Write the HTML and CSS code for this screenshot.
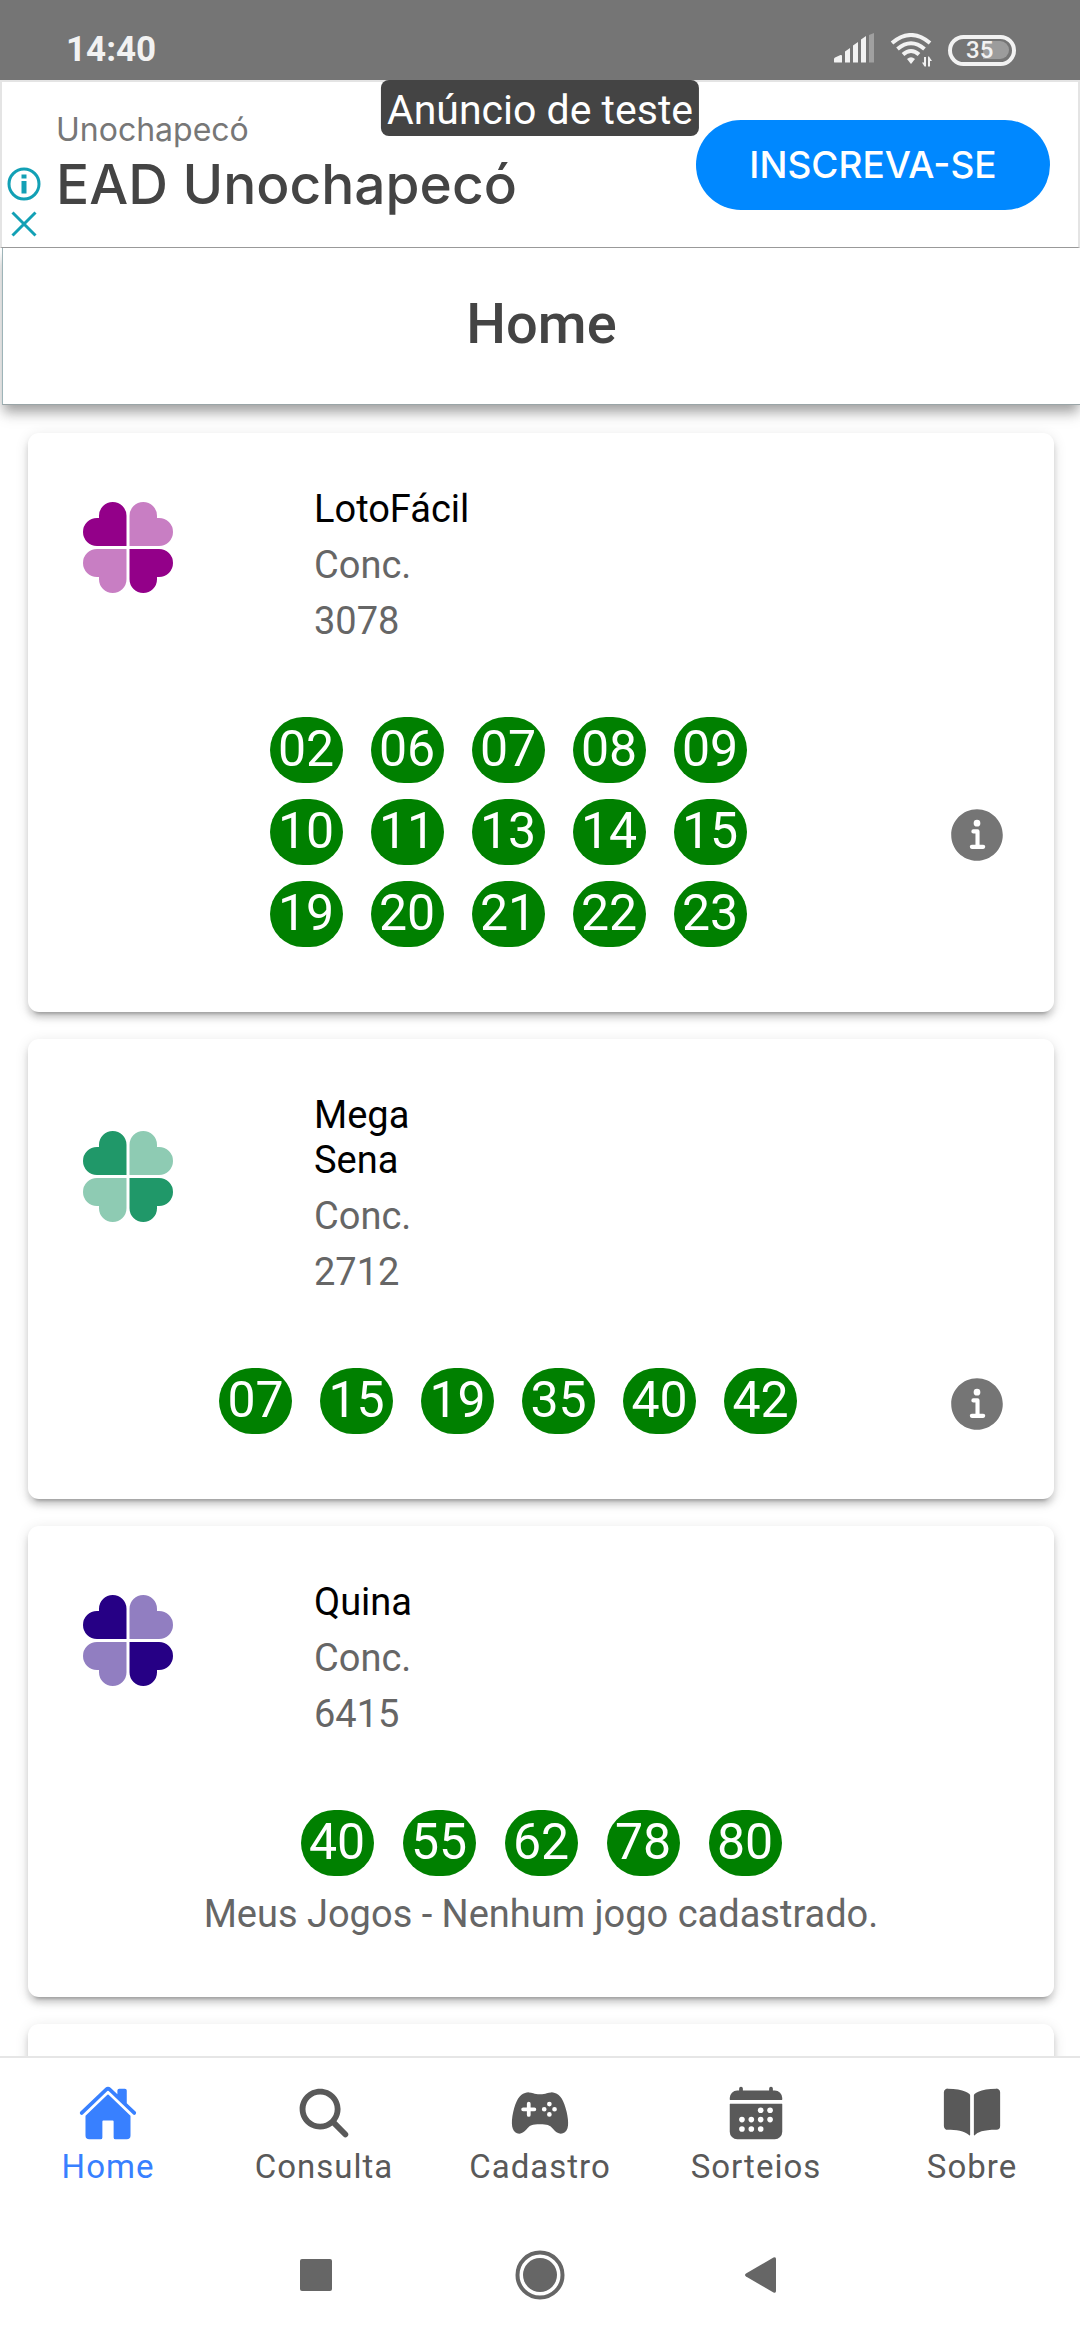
FILE: index.html
```html
<!DOCTYPE html>
<html lang="pt-BR">
<head>
<meta charset="utf-8">
<meta name="viewport" content="width=device-width, initial-scale=1">
<title>Home</title>
<link rel="stylesheet" href="styles.css">
</head>
<body>
<svg class="defs" aria-hidden="true">
  <defs>
    <path id="leaf" d="M43.5 44H14a14 14 0 0 1 0-28h2v-2.250a13.750 13.750 0 0 1 27.500 0z"/>
    <symbol id="clover" viewBox="0 0 90 91">
      <use href="#leaf"/>
      <use href="#leaf" transform="translate(90 91) scale(-1 -1)"/>
      <g opacity=".5">
        <use href="#leaf" transform="translate(90 0) scale(-1 1)"/>
        <use href="#leaf" transform="translate(0 91) scale(1 -1)"/>
      </g>
    </symbol>
    <symbol id="info" viewBox="0 0 512 512">
      <path d="M256 56C145.720 56 56 145.720 56 256s89.720 200 200 200 200-89.720 200-200S366.280 56 256 56zm0 82a26 26 0 11-26 26 26 26 0 0126-26zm48 226h-88a16 16 0 010-32h28v-88h-16a16 16 0 010-32h32a16 16 0 0116 16v104h28a16 16 0 010 32z"/>
    </symbol>
  </defs>
</svg>

<div class="status">
  <span class="clock">14:40</span>
  <svg class="signal" viewBox="0 0 40 34" aria-hidden="true">
    <path d="M0 29v-3q0-1 1-1.500L6.500 22q1.500-.5 1.500 1v6.500H1q-1 0-1-.5zM11 29.500v-11l5-3.500v14.500zM19 29.500v-17L24 9v20.500zM27 29.500v-23L32 3v26.500z"/>
    <path class="dim" d="M35 29.500V2l5-2v29.500z"/>
  </svg>
  <svg class="wifi" viewBox="0 0 42 34" aria-hidden="true">
    <g class="arcs"><path d="M2 10Q21-6 40 10"/><path d="M7.500 16Q21 4.500 34.500 16"/><path d="M13 21.500Q21 14.500 29 21.500"/></g>
    <path d="M17 26q4-3.500 8 0l-4 5z"/>
    <path d="M36 24v9.500h-1.500L32 29.500h2V24zM38 33.500v-10h1L42 28h-2v5.500z"/>
  </svg>
  <span class="battery"><span>35</span></span>
</div>

<section class="ad" aria-label="Anúncio">
  <div class="ad-choices">
    <svg viewBox="0 0 34 34" aria-hidden="true"><circle cx="17" cy="17" r="15"/><path class="stem" d="M17 14v12.500M17 7.500v4"/></svg>
    <svg viewBox="0 0 34 34" aria-hidden="true"><path d="M5.500 5.500l23 23M28.500 5.500l-23 23"/></svg>
  </div>
  <div class="ad-text">
    <p class="advertiser">Unochapecó</p>
    <p class="headline">EAD Unochapecó</p>
  </div>
  <button class="cta" type="button">INSCREVA-SE</button>
  <span class="test-badge">Anúncio de teste</span>
</section>

<header class="title-bar"><h1>Home</h1></header>

<main>
  <article class="card">
    <div class="game">
      <svg class="clover lotofacil" aria-hidden="true"><use href="#clover"/></svg>
      <div class="about"><h2>LotoFácil</h2><p>Conc.</p><p>3078</p></div>
    </div>
    <div class="result">
      <ul class="balls five">
        <li>02</li><li>06</li><li>07</li><li>08</li><li>09</li>
        <li>10</li><li>11</li><li>13</li><li>14</li><li>15</li>
        <li>19</li><li>20</li><li>21</li><li>22</li><li>23</li>
      </ul>
      <button class="info" type="button" aria-label="Detalhes da LotoFácil"><svg><use href="#info"/></svg></button>
    </div>
  </article>

  <article class="card">
    <div class="game">
      <svg class="clover mega" aria-hidden="true"><use href="#clover"/></svg>
      <div class="about"><h2>Mega Sena</h2><p>Conc.</p><p>2712</p></div>
    </div>
    <div class="result">
      <ul class="balls six">
        <li>07</li><li>15</li><li>19</li><li>35</li><li>40</li><li>42</li>
      </ul>
      <button class="info" type="button" aria-label="Detalhes da Mega Sena"><svg><use href="#info"/></svg></button>
    </div>
  </article>

  <article class="card">
    <div class="game">
      <svg class="clover quina" aria-hidden="true"><use href="#clover"/></svg>
      <div class="about"><h2>Quina</h2><p>Conc.</p><p>6415</p></div>
    </div>
    <div class="result">
      <ul class="balls five loose">
        <li>40</li><li>55</li><li>62</li><li>78</li><li>80</li>
      </ul>
    </div>
    <p class="my-games">Meus Jogos - Nenhum jogo cadastrado.</p>
  </article>

  <article class="card"></article>
</main>

<nav class="tabs">
  <a class="active" href="#home">
    <svg viewBox="0 0 512 512" aria-hidden="true"><path d="M261.560 101.280a8 8 0 00-11.060 0L66.400 277.150a8 8 0 00-2.470 5.790L63.900 448a32 32 0 0032 32H192a16 16 0 0016-16V328a8 8 0 018-8h80a8 8 0 018 8v136a16 16 0 0016 16h96.060a32 32 0 0032-32V282.940a8 8 0 00-2.470-5.790z"/><path d="M490.910 244.150l-74.800-71.560V64a16 16 0 00-16-16h-48a16 16 0 00-16 16v32l-57.920-55.380C272.770 35.140 264.710 32 256 32c-8.680 0-16.720 3.140-22.140 8.630l-212.700 203.500c-6.220 6-7 15.870-1.340 22.370A16 16 0 0043 267.560L250.500 69.280a8 8 0 0111.060 0l207.520 198.280a16 16 0 0022.590-.44c6.140-6.360 5.630-16.860-.76-22.970z"/></svg>
    Home
  </a>
  <a href="#consulta">
    <svg viewBox="0 0 512 512" aria-hidden="true"><path d="M456.690 421.390L362.600 327.300a173.810 173.810 0 0034.840-104.580C397.440 126.380 319.060 48 222.720 48S48 126.380 48 222.720s78.380 174.720 174.720 174.720A173.810 173.810 0 00327.300 362.600l94.090 94.090a25 25 0 0035.300-35.300zM97.920 222.720a124.800 124.800 0 11124.800 124.800 124.950 124.950 0 01-124.800-124.800z"/></svg>
    Consulta
  </a>
  <a href="#cadastro">
    <svg viewBox="0 0 512 512" aria-hidden="true"><path d="M483.130 245.380C461.920 149.490 430 98.310 382.650 84.330A107.130 107.130 0 00352 80c-13.710 0-25.650 3.340-38.280 6.880C298.500 91.150 281.210 96 256 96s-42.510-4.840-57.760-9.110C185.600 83.340 173.670 80 160 80a115.740 115.740 0 00-31.730 4.320c-47.100 13.920-79 65.080-100.520 161C4.610 348.540 16 413.710 59.690 428.830a56.620 56.620 0 0018.640 3.220c29.930 0 53.930-24.930 70.330-45.340 18.530-23.100 40.220-34.820 107.340-34.820 59.950 0 84.760 8.130 106.190 34.820 13.470 16.780 26.200 28.520 38.900 35.910 16.890 9.820 33.770 12 50.160 6.370 25.820-8.810 40.620-32.100 44-69.240 2.570-28.480-1.390-65.890-12.120-114.370zM208 240h-32v32a16 16 0 01-32 0v-32h-32a16 16 0 010-32h32v-32a16 16 0 0132 0v32h32a16 16 0 010 32zm84 4a20 20 0 1120-20 20 20 0 01-20 20zm44 44a20 20 0 1120-19.950A20 20 0 01336 288zm0-88a20 20 0 1120-20 20 20 0 01-20 20zm44 44a20 20 0 1120-20 20 20 0 01-20 20z"/></svg>
    Cadastro
  </a>
  <a href="#sorteios">
    <svg viewBox="0 0 512 512" aria-hidden="true"><path d="M480 128a64 64 0 00-64-64h-16V48.450c0-8.610-6.620-16-15.230-16.430A16 16 0 00368 48v16H144V48.450c0-8.610-6.620-16-15.230-16.430A16 16 0 00112 48v16H96a64 64 0 00-64 64v12a4 4 0 004 4h440a4 4 0 004-4zM32 416a64 64 0 0064 64h320a64 64 0 0064-64V179a3 3 0 00-3-3H35a3 3 0 00-3 3z"/><g class="dots"><circle cx="296" cy="232" r="24"/><circle cx="376" cy="232" r="24"/><circle cx="136" cy="312" r="24"/><circle cx="216" cy="312" r="24"/><circle cx="296" cy="312" r="24"/><circle cx="376" cy="312" r="24"/><circle cx="136" cy="392" r="24"/><circle cx="216" cy="392" r="24"/><circle cx="296" cy="392" r="24"/></g></svg>
    Sorteios
  </a>
  <a href="#sobre">
    <svg viewBox="0 0 512 512" aria-hidden="true"><path d="M202.240 74C166.110 56.750 115.610 48.300 48 48a31.360 31.360 0 00-17.920 5.330A32 32 0 0016 79.900V366c0 19.340 13.760 33.930 32 33.930 71.070 0 142.360 6.640 185.060 47a4.110 4.110 0 006.940-3V106.820a15.890 15.890 0 00-5.460-12A143 143 0 00202.240 74zM481.920 53.300A31.330 31.330 0 00464 48c-67.610.3-118.110 8.710-154.240 26a143.310 143.310 0 00-32.310 20.780 15.930 15.930 0 00-5.450 12v337.130a3.930 3.930 0 006.680 2.810c25.670-25.500 70.720-46.820 185.360-46.810a32 32 0 0032-32v-288a32 32 0 00-14.120-26.610z"/></svg>
    Sobre
  </a>
</nav>

<div class="system-nav">
  <button type="button" aria-label="Recentes"><svg viewBox="0 0 50 50"><rect x="9" y="9" width="32" height="32" rx="2"/></svg></button>
  <button type="button" aria-label="Início"><svg viewBox="0 0 50 50"><circle cx="25" cy="25" r="17"/><circle class="ring" cx="25" cy="25" r="22.500"/></svg></button>
  <button type="button" aria-label="Voltar"><svg viewBox="0 0 50 50"><path d="M7 23.500L34.500 7.500q2.500-1 2.500 1.500v32q0 2.500-2.500 1.500L7 26.500q-2-1.500 0-3z"/></svg></button>
</div>
</body>
</html>
```

FILE: styles.css
```css
* {
  box-sizing: border-box;
  margin: 0;
  padding: 0;
}

body {
  display: flex;
  flex-direction: column;
  height: 100vh;
  background: #fff;
  color: #666;
  font-family: Roboto, sans-serif;
  font-size: 38px;
  line-height: 45px;
}

button {
  border: 0;
  background: none;
  color: inherit;
  font: inherit;
}

svg {
  display: block;
  fill: currentColor;
}

.defs {
  position: absolute;
  width: 0;
  height: 0;
}

/* Status bar */
.status {
  display: flex;
  flex: none;
  align-items: center;
  height: 80px;
  padding: 20px 64px 0 66px;
  background: #757575;
  color: #f2f2f2;
}

.clock {
  flex: 1;
  font-size: 35px;
  font-weight: 700;
  line-height: 40px;
}

.signal {
  width: 40px;
  height: 34px;
  margin-right: 16px;
}

.signal .dim {
  fill: #a0a0a0;
}

.wifi {
  width: 42px;
  height: 34px;
  margin-right: 16px;
}

.arcs {
  fill: none;
  stroke: currentColor;
  stroke-width: 4;
}

.battery {
  display: flex;
  align-items: center;
  width: 68px;
  height: 31px;
  padding: 3px;
  border: 4px solid #f2f2f2;
  border-radius: 16px;
  font-size: 24px;
  font-weight: 500;
  line-height: 24px;
}

.battery span {
  width: 100%;
  height: 18px;
  padding-left: 11px;
  border-radius: 9px;
  background: linear-gradient(90deg, transparent 52%, #9c9c9c 52%);
  line-height: 19px;
}

/* Advertisement banner */
.ad {
  position: relative;
  z-index: 2;
  display: flex;
  flex: none;
  align-items: center;
  height: 168px;
  padding-right: 28px;
  border: 2px solid #e4e4e4;
  border-bottom: 1px solid #999;
  background: #fff;
}

.ad-choices {
  display: flex;
  flex-direction: column;
  gap: 6px;
  align-self: flex-end;
  padding: 0 15px 6px 5px;
  color: #12a0b5;
}

.ad-choices svg {
  width: 34px;
  height: 34px;
  fill: none;
  stroke: currentColor;
  stroke-width: 3;
}

.ad-choices .stem {
  stroke-width: 5;
}

.ad-text {
  flex: 1;
  padding-bottom: 4px;
  font-family: Inter, sans-serif;
}

.advertiser {
  color: #777;
  font-size: 32px;
  line-height: 40px;
}

.headline {
  margin-top: 2px;
  color: #444;
  font-size: 55px;
  font-weight: 500;
  line-height: 64px;
}

.cta {
  width: 354px;
  height: 90px;
  border-radius: 45px;
  background: #08f;
  color: #fff;
  font-family: Inter, sans-serif;
  font-size: 37px;
  font-weight: 500;
}

.test-badge {
  position: absolute;
  top: -2px;
  left: 50%;
  height: 56px;
  padding: 0 6px;
  border-radius: 8px;
  background: #444;
  color: #fff;
  font-size: 41px;
  line-height: 60px;
  transform: translateX(-50%);
}

/* Page title */
.title-bar {
  position: relative;
  z-index: 1;
  flex: none;
  margin-left: 2px;
  padding: 43px 0 47px;
  border-left: 1px solid #9db4b8;
  border-bottom: 1px solid #9aa5a7;
  background: #fff;
  box-shadow: 0 8px 11px -2px rgba(0, 0, 0, .3), 0 11px 14px rgba(0, 0, 0, .1);
  color: #444;
  text-align: center;
}

h1 {
  font-size: 56px;
  font-weight: 500;
  line-height: 66px;
}

/* Results list */
main {
  display: flex;
  flex: 1;
  flex-direction: column;
  gap: 27px;
  min-height: 0;
  padding: 28px 26px 28px 28px;
  overflow: auto;
  scrollbar-width: none;
}

.card {
  flex: none;
  padding: 54px 44px 60px;
  border-radius: 11px;
  background: #fff;
  box-shadow: 0 8px 3px -6px rgba(0, 0, 0, .2), 0 6px 6px rgba(0, 0, 0, .14), 0 3px 14px rgba(0, 0, 0, .12);
}

.game {
  display: flex;
  align-items: center;
  gap: 141px;
  padding-left: 11px;
}

.clover {
  width: 90px;
  height: 91px;
  margin-bottom: 36px;
}

.lotofacil {
  color: #930089;
}

.mega {
  color: #209869;
}

.quina {
  color: #260085;
}

.about {
  display: flex;
  flex-direction: column;
  gap: 11px;
  width: 160px;
}

h2 {
  color: #000;
  font-size: 38px;
  font-weight: 400;
}

.result {
  display: flex;
  align-items: center;
  margin: 73px 0 5px;
}

.balls {
  display: grid;
  flex: 1;
  gap: 16px 28px;
  justify-content: center;
  list-style: none;
}

.five {
  grid-template-columns: repeat(5, 73px);
}

.six {
  grid-template-columns: repeat(6, 73px);
}

.loose {
  column-gap: 29px;
}

.balls li {
  height: 66px;
  border-radius: 33px;
  background: #008000;
  color: #fff;
  font-size: 50px;
  line-height: 64px;
  text-align: center;
}

.info {
  width: 66px;
  height: 66px;
  padding-top: 3px;
  color: #757575;
}

.info svg {
  width: 66px;
  height: 66px;
}

.my-games {
  margin-top: 16px;
  text-align: center;
}

/* Tab bar */
.tabs {
  z-index: 1;
  display: grid;
  flex: none;
  grid-template-columns: repeat(5, 1fr);
  padding: 25px 0 23px;
  border-top: 2px solid #e6e6e6;
  background: #fff;
}

.tabs a {
  display: flex;
  flex-direction: column;
  gap: 4px;
  align-items: center;
  color: #595959;
  font-size: 33px;
  letter-spacing: 1px;
  line-height: 40px;
  text-decoration: none;
}

.tabs .active {
  color: #3880ff;
}

.tabs svg {
  width: 60px;
  height: 60px;
}

.dots {
  fill: #fff;
}

/* System navigation */
.system-nav {
  display: flex;
  flex: none;
  gap: 174px;
  justify-content: center;
  padding: 40px 0;
  background: #fff;
  color: #666;
}

.system-nav svg {
  width: 50px;
  height: 50px;
}

.ring {
  fill: none;
  stroke: currentColor;
  stroke-width: 4;
}
```
